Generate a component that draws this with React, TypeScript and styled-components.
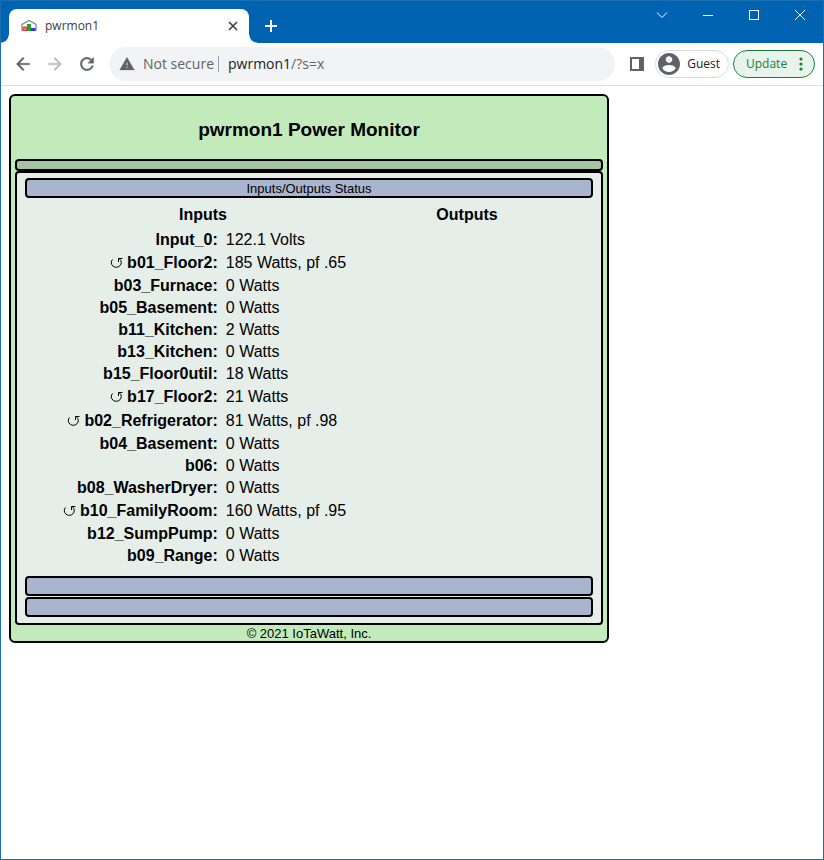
import React from "react";
import styled, { createGlobalStyle } from "styled-components";

const GlobalStyle = createGlobalStyle`
  * { box-sizing: border-box; }
  html, body { margin: 0; background: #fff; }
  button, input { font: inherit; color: inherit; }
`;

const Window = styled.div`
  display: flex;
  flex-direction: column;
  min-height: 100vh;
  border: 1px solid #1a6fb2;
  background: #fff;
  font-family: "Open Sans", "Noto Sans", sans-serif;
`;

const TitleBar = styled.header`
  display: flex;
  align-items: flex-end;
  height: 42px;
  padding-left: 8px;
  background: #0063b1;
`;

const Tab = styled.div`
  position: relative;
  display: flex;
  align-items: center;
  gap: 8px;
  width: 240px;
  height: 34px;
  padding: 0 8px 0 12px;
  border-radius: 8px 8px 0 0;
  background: #fff;
  color: #3c4043;
  font-size: 12px;
  line-height: 16px;

  &::before,
  &::after {
    content: "";
    position: absolute;
    bottom: 0;
    width: 8px;
    height: 8px;
  }
  &::before {
    right: 100%;
    background: radial-gradient(circle at 0 0, transparent 7px, #fff 8px);
  }
  &::after {
    left: 100%;
    background: radial-gradient(circle at 100% 0, transparent 7px, #fff 8px);
  }
`;

const TabTitle = styled.span`
  flex: 1;
`;

const IconButton = styled.button<{ $width?: number; $height?: number; $tone?: string }>`
  display: flex;
  align-items: center;
  justify-content: center;
  flex: none;
  width: ${(p) => p.$width ?? 32}px;
  height: ${(p) => p.$height ?? 32}px;
  padding: 0;
  border: 0;
  background: none;
  color: ${(p) => p.$tone ?? "#5f6368"};
`;

const WindowControls = styled.div`
  display: flex;
  align-self: flex-start;
  margin-left: auto;
`;

const Toolbar = styled.nav`
  display: flex;
  align-items: center;
  height: 43px;
  padding: 0 8px 0 6px;
  border-bottom: 1px solid #dadce0;
`;

const AddressBar = styled.div`
  display: flex;
  align-items: center;
  flex: 1;
  min-width: 0;
  height: 34px;
  margin: 0 6px;
  padding: 0 10px;
  border-radius: 17px;
  background: #f1f3f4;
  color: #5f6368;
  font-size: 14px;
  line-height: 20px;
`;

const Security = styled.span`
  margin-left: 8px;
  padding-right: 4px;
  white-space: nowrap;
`;

const Divider = styled.span`
  width: 1px;
  height: 16px;
  margin-right: 9px;
  background: #9aa0a6;
`;

const Address = styled.a`
  color: #5f6368;
  text-decoration: none;
`;

const Host = styled.span`
  color: #202124;
`;

const Pill = styled.button<{ $update?: boolean }>`
  display: flex;
  align-items: center;
  justify-content: space-between;
  flex: none;
  width: ${(p) => (p.$update ? 82 : 74)}px;
  height: 28px;
  margin-left: ${(p) => (p.$update ? 4 : 2)}px;
  padding: ${(p) => (p.$update ? "0 11px 0 12px" : "0 8px 0 2px")};
  border: 1px solid ${(p) => (p.$update ? "#188038" : "#dadce0")};
  border-radius: 14px;
  background: ${(p) => (p.$update ? "#e8f3ec" : "#fff")};
  color: ${(p) => (p.$update ? "#188038" : "#202124")};
  font-size: 12px;
  line-height: 16px;
`;

const Page = styled.main`
  padding: 8px;
  font-family: "Liberation Sans", Arial, sans-serif;
  color: #000;
`;

const Card = styled.section`
  width: 600px;
  max-width: 100%;
  padding: 0 4px;
  border: 2px solid #000;
  border-radius: 6px;
  background: #c3eabb;
`;

const Title = styled.h1`
  margin: 0;
  padding: 23px 0 18px;
  font-size: 19px;
  line-height: 22px;
  text-align: center;
`;

const MenuBar = styled.div`
  height: 12px;
  border: 2px solid #000;
  border-radius: 4px;
  background: #a6c4a0;
`;

const Panel = styled.div`
  padding: 5px 8px 6px;
  border: 2px solid #000;
  border-radius: 4px;
  background: #e6eeea;
`;

const SectionBar = styled.button`
  display: block;
  width: 100%;
  height: 20px;
  padding: 1px 0 0;
  border: 2px solid #000;
  border-radius: 4px;
  background: #a9b4cf;
  font-size: 13px;
  line-height: 15px;
  text-align: center;

  & + & {
    margin-top: 1px;
  }
`;

const Status = styled.div`
  display: flex;
  padding: 6px 40px 9px 0;
`;

const Column = styled.section<{ $grow: number }>`
  flex: ${(p) => p.$grow} 1 0;
`;

const ColumnTitle = styled.h2`
  margin: 0 0 3px;
  font-size: 16px;
  line-height: 22px;
  text-align: center;
`;

const Readings = styled.table`
  width: 100%;
  table-layout: fixed;
  border-collapse: collapse;
  font-size: 16px;
  line-height: 20px;
`;

const Row = styled.tr<{ $tall?: boolean }>`
  height: ${(p) => (p.$tall ? 24 : 22)}px;
`;

const Name = styled.th`
  width: 55%;
  padding: 0 3px 0 0;
  text-align: right;
  white-space: nowrap;
`;

const Value = styled.td`
  padding: 0 0 0 5px;
  white-space: nowrap;
`;

const Reverse = styled.svg`
  margin-right: 4px;
  vertical-align: -1px;
`;

const Footer = styled.footer`
  padding-top: 1px;
  font-size: 13px;
  line-height: 15px;
  text-align: center;
`;

type Reading = { name: string; value: string; reversed?: boolean };

const readings: Reading[] = [
  { name: "Input_0", value: "122.1 Volts" },
  { name: "b01_Floor2", value: "185 Watts, pf .65", reversed: true },
  { name: "b03_Furnace", value: "0 Watts" },
  { name: "b05_Basement", value: "0 Watts" },
  { name: "b11_Kitchen", value: "2 Watts" },
  { name: "b13_Kitchen", value: "0 Watts" },
  { name: "b15_Floor0util", value: "18 Watts" },
  { name: "b17_Floor2", value: "21 Watts", reversed: true },
  { name: "b02_Refrigerator", value: "81 Watts, pf .98", reversed: true },
  { name: "b04_Basement", value: "0 Watts" },
  { name: "b06", value: "0 Watts" },
  { name: "b08_WasherDryer", value: "0 Watts" },
  { name: "b10_FamilyRoom", value: "160 Watts, pf .95", reversed: true },
  { name: "b12_SumpPump", value: "0 Watts" },
  { name: "b09_Range", value: "0 Watts" },
];

const Favicon = () => (
  <svg width="16" height="16" viewBox="0 0 16 16" aria-hidden="true">
    <path d="M1 13V6.500L8 2.500L15 6.500V13" fill="none" stroke="#8a8a8a" strokeWidth="1.300" />
    <rect x="1.500" y="8.500" width="4.500" height="4.500" fill="#ee3344" />
    <path d="M2.500 9.500L5 12M5 9.500L2.500 12" stroke="#f9b0b6" strokeWidth="0.700" />
    <rect x="6" y="6" width="4" height="7" fill="#18a52a" />
    <rect x="10" y="10" width="4.500" height="3" fill="#2a35ee" />
  </svg>
);

const ReverseMark = () => (
  <Reverse width="13" height="12" viewBox="0 0 13 12" role="img" aria-label="Reversed" fill="none" stroke="#000">
    <path d="M2.500 2.500A5 4.700 0 1 0 9.500 2" />
    <path d="M12.500 1.500H8.500V5" />
  </Reverse>
);

const MaterialIcon = ({ d, size }: { d: string; size: number }) => (
  <svg width={size} height={size} viewBox="0 0 24 24" fill="currentColor" stroke="currentColor" strokeWidth="0.400" aria-hidden="true">
    <path d={d} />
  </svg>
);

export default function App() {
  return (
    <>
      <GlobalStyle />
      <Window>
        <TitleBar>
          <Tab>
            <Favicon />
            <TabTitle>pwrmon1</TabTitle>
            <IconButton $width={16} $height={16} $tone="#3c4043" aria-label="Close tab">
              <svg width="10" height="10" viewBox="0 0 10 10" stroke="currentColor" strokeWidth="1.600">
                <path d="M1 1L9 9M9 1L1 9" />
              </svg>
            </IconButton>
          </Tab>
          <IconButton $width={44} $height={34} $tone="#fff" aria-label="New tab">
            <svg width="12" height="12" viewBox="0 0 12 12" stroke="currentColor" strokeWidth="2">
              <path d="M6 0V12M0 6H12" />
            </svg>
          </IconButton>
          <WindowControls>
            <IconButton $width={46} $height={28} $tone="#fff" aria-label="Search tabs">
              <svg width="12" height="12" viewBox="0 0 12 12" fill="none" stroke="currentColor">
                <path d="M1 3.500L6 8.500L11 3.500" />
              </svg>
            </IconButton>
            <IconButton $width={46} $height={28} $tone="#fff" aria-label="Minimize">
              <svg width="10" height="10" viewBox="0 0 10 10" stroke="currentColor">
                <path d="M0 5.500H10" />
              </svg>
            </IconButton>
            <IconButton $width={46} $height={28} $tone="#fff" aria-label="Maximize">
              <svg width="10" height="10" viewBox="0 0 10 10" fill="none" stroke="currentColor">
                <rect x="0.500" y="0.500" width="9" height="9" />
              </svg>
            </IconButton>
            <IconButton $width={46} $height={28} $tone="#fff" aria-label="Close">
              <svg width="10" height="10" viewBox="0 0 10 10" stroke="currentColor">
                <path d="M0 0L10 10M10 0L0 10" />
              </svg>
            </IconButton>
          </WindowControls>
        </TitleBar>

        <Toolbar>
          <IconButton aria-label="Back">
            <MaterialIcon size={20} d="M20 11H7.830l5.590-5.590L12 4l-8 8 8 8 1.410-1.410L7.830 13H20v-2z" />
          </IconButton>
          <IconButton $tone="#babcbe" aria-label="Forward">
            <MaterialIcon size={20} d="M12 4l-1.410 1.410L16.170 11H4v2h12.170l-5.580 5.590L12 20l8-8z" />
          </IconButton>
          <IconButton aria-label="Reload">
            <MaterialIcon
              size={20}
              d="M17.650 6.350C16.200 4.900 14.210 4 12 4c-4.420 0-7.990 3.580-7.990 8s3.570 8 7.990 8c3.730 0 6.840-2.550 7.730-6h-2.080c-.82 2.330-3.040 4-5.650 4-3.310 0-6-2.690-6-6s2.690-6 6-6c1.660 0 3.140.69 4.220 1.780L13 11h7V4l-2.350 2.350z"
            />
          </IconButton>
          <AddressBar>
            <MaterialIcon size={16} d="M1 21h22L12 2 1 21zm12-3h-2v-2h2v2zm0-4h-2v-4h2v4z" />
            <Security>Not secure</Security>
            <Divider />
            <Address href="#">
              <Host>pwrmon1</Host>/?s=x
            </Address>
          </AddressBar>
          <IconButton aria-label="Side panel">
            <svg width="14" height="14" viewBox="0 0 14 14">
              <path fill="currentColor" fillRule="evenodd" d="M0 0H14V14H0zM2 2V12H9V2z" />
            </svg>
          </IconButton>
          <Pill>
            <svg width="22" height="22" viewBox="2 2 20 20" fill="#5f6368" aria-hidden="true">
              <path d="M12 2C6.480 2 2 6.480 2 12s4.480 10 10 10 10-4.480 10-10S17.520 2 12 2zm0 3c1.660 0 3 1.340 3 3s-1.340 3-3 3-3-1.340-3-3 1.340-3 3-3zm0 14.200c-2.500 0-4.710-1.280-6-3.220.03-1.990 4-3.080 6-3.080 1.990 0 5.970 1.090 6 3.080-1.290 1.940-3.500 3.220-6 3.220z" />
            </svg>
            Guest
          </Pill>
          <Pill $update>
            Update
            <svg width="4" height="14" viewBox="0 0 4 14" fill="currentColor" aria-hidden="true">
              <circle cx="2" cy="2" r="1.600" />
              <circle cx="2" cy="7" r="1.600" />
              <circle cx="2" cy="12" r="1.600" />
            </svg>
          </Pill>
        </Toolbar>

        <Page>
          <Card>
            <Title>pwrmon1 Power Monitor</Title>
            <MenuBar />
            <Panel>
              <SectionBar>Inputs/Outputs Status</SectionBar>
              <Status>
                <Column $grow={356}>
                  <ColumnTitle>Inputs</ColumnTitle>
                  <Readings>
                    <tbody>
                      {readings.map((r) => (
                        <Row key={r.name} $tall={r.reversed}>
                          <Name scope="row">
                            {r.reversed && <ReverseMark />}
                            {r.name}:
                          </Name>
                          <Value>{r.value}</Value>
                        </Row>
                      ))}
                    </tbody>
                  </Readings>
                </Column>
                <Column $grow={172}>
                  <ColumnTitle>Outputs</ColumnTitle>
                </Column>
              </Status>
              <SectionBar aria-label="Expand section" />
              <SectionBar aria-label="Expand section" />
            </Panel>
            <Footer>© 2021 IoTaWatt, Inc.</Footer>
          </Card>
        </Page>
      </Window>
    </>
  );
}
